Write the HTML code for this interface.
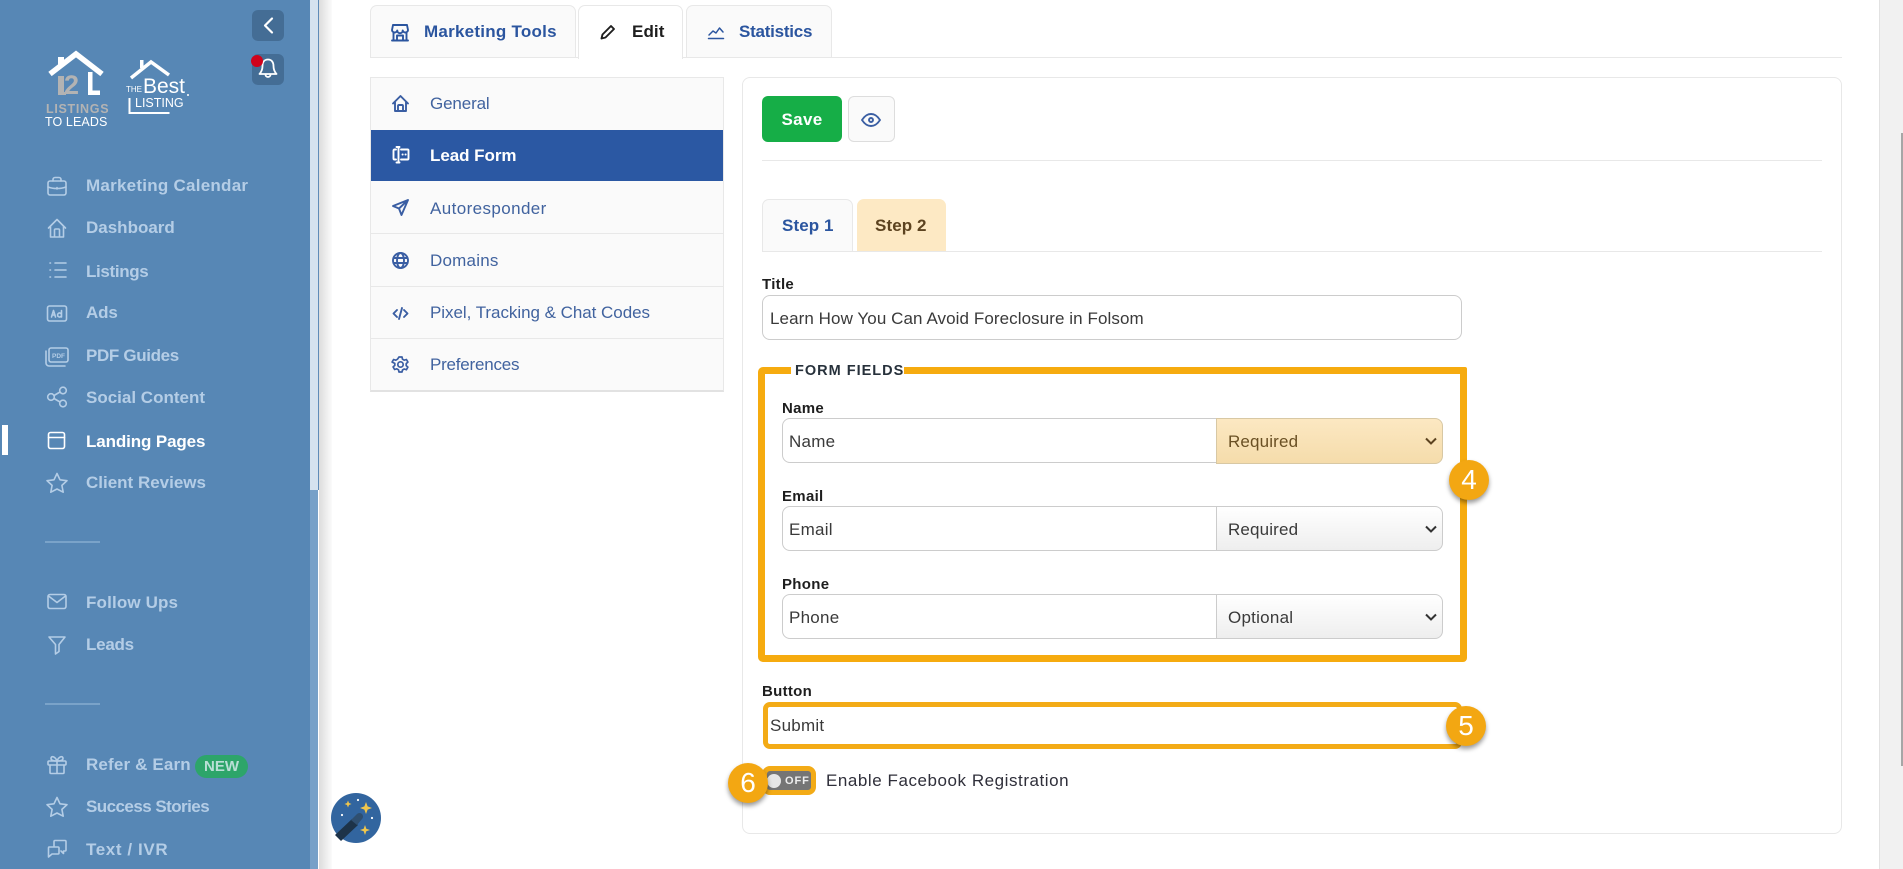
<!DOCTYPE html>
<html lang="en"><head><meta charset="utf-8"><title>Lead Form</title>
<style>
html,body{margin:0;padding:0;width:1903px;height:869px;overflow:hidden;background:#fff;font-family:"Liberation Sans",sans-serif;color:#333}
.a{position:absolute;box-sizing:border-box}
.t{position:absolute;white-space:nowrap;line-height:20px;height:20px}
.nav{left:86px;font-weight:700;font-size:17px;color:#b4cde6;letter-spacing:0}
.i{position:absolute;fill:none;stroke:#b4cde6;stroke-width:1.6;stroke-linecap:round;stroke-linejoin:round;overflow:visible}
.m{position:absolute;fill:none;stroke:#3a5ea3;stroke-width:1.9;stroke-linecap:round;stroke-linejoin:round;overflow:visible}
.tab{background:#fafafa;border:1px solid #e8e8e8;border-bottom:none;border-radius:7px 7px 0 0}
.tb{font-weight:700;font-size:17px;color:#2b559f;letter-spacing:.25px}
.row{left:371px;width:353px;height:1px;background:#e8e8e8}
.mi{left:430px;font-size:17px;color:#41639f}
.lb{font-weight:700;font-size:15px;color:#1e1e1e;letter-spacing:.3px}
.v{font-size:17px;color:#3a3a3a;letter-spacing:.25px}
.inp{background:#fff;border:1px solid #ccc}
.sel{background:linear-gradient(#fff,#eee);border:1px solid #ccc;border-radius:0 8px 8px 0}
.badge{position:absolute;width:40px;height:40px;border-radius:50%;background:#f3a712;color:#fff;font-size:28px;line-height:40px;text-align:center;box-shadow:0 3px 5px rgba(0,0,0,.4)}
</style></head><body>

<!-- sidebar -->
<div class="a" style="left:0;top:0;width:310px;height:869px;background:#5787b5"></div>
<div class="a" style="left:310px;top:0;width:8px;height:490px;background:#d5e2ef"></div>
<div class="a" style="left:310px;top:490px;width:8px;height:379px;background:#76a0c8"></div>
<div class="a" style="left:318px;top:0;width:1px;height:490px;background:#5f8bb8"></div>
<div class="a" style="left:319px;top:0;width:13px;height:869px;background:linear-gradient(90deg,#dcdcdc,#fbfbfb)"></div>

<div class="a" style="left:252px;top:10px;width:32px;height:31px;border-radius:6px;background:#446d95"></div>
<svg class="a" style="left:252px;top:10px" width="32" height="31" viewBox="0 0 32 31"><path d="M20 8.500l-7 7 7 7" fill="none" stroke="#fff" stroke-width="2.200" stroke-linecap="round" stroke-linejoin="round"/></svg>
<div class="a" style="left:252px;top:54px;width:32px;height:31px;border-radius:6px;background:#446d95"></div>
<svg class="a" style="left:252px;top:54px" width="32" height="31" viewBox="0 0 32 31"><path d="M16 5.500c-3.800 0-5.500 3-5.500 6.500 0 4-1.200 6-3 8h17c-1.800-2-3-4-3-8 0-3.500-1.700-6.500-5.500-6.500zM13.500 20.500a2.500 2.500 0 0 0 5 0" fill="none" stroke="#fff" stroke-width="1.800" stroke-linejoin="round"/></svg>
<div class="a" style="left:251px;top:55px;width:12px;height:12px;border-radius:50%;background:#d0021b"></div>

<!-- logos -->
<svg class="a" style="left:40px;top:48px" width="160" height="85" viewBox="0 0 160 85">
<path d="M18 9h6v9h-6z" fill="#fff"/>
<path d="M10 26L36 6l26 20" fill="none" stroke="#fff" stroke-width="5.500"/>
<path d="M18 28h6v19h-6z" fill="#b3b3b3"/>
<path d="M18 47h8v-3h-8z" fill="#b3b3b3"/>
<text x="24" y="46" font-family="Liberation Sans" font-weight="700" font-size="27" fill="#b3b3b3" letter-spacing="-1">2</text>
<path d="M48 24h4.500v18.500H60v4.500H48z" fill="#fff"/>
<text x="6" y="65" font-family="Liberation Sans" font-weight="700" font-size="12.500" fill="#b3b3b3" letter-spacing=".7">LISTINGS</text>
<text x="5" y="78" font-family="Liberation Sans" font-size="12.500" fill="#fff" letter-spacing=".1">TO LEADS</text>
<path d="M100 12h3.500v8H100z" fill="#fff"/>
<path d="M91 30l20-16 18 13" fill="none" stroke="#fff" stroke-width="3.500"/>
<text x="86" y="44" font-family="Liberation Sans" font-size="8" fill="#fff">THE</text>
<text x="103" y="45" font-family="Liberation Sans" font-size="21" fill="#fff">Best</text>
<text x="95" y="59" font-family="Liberation Sans" font-size="12.500" fill="#fff">LISTING</text>
<path d="M89.500 50v15h40" fill="none" stroke="#fff" stroke-width="2"/>
<circle cx="148" cy="47" r="1" fill="#fff"/>
</svg>

<!-- nav icons -->
<svg class="i" style="left:46px;top:175px" width="22" height="22" viewBox="0 0 22 22"><rect x="2" y="6" width="18" height="14" rx="2"/><path d="M7 6V4.500a2 2 0 0 1 2-2h4a2 2 0 0 1 2 2V6M2 12c5 2 13 2 18 0M11 12.500v1.500"/></svg>
<svg class="i" style="left:46px;top:217px" width="22" height="22" viewBox="0 0 22 22"><path d="M2.500 11L11 2.500 19.500 11M4.500 9.500V20h13V9.500M8.500 20v-7a1 1 0 0 1 1-1h3a1 1 0 0 1 1 1v7"/></svg>
<svg class="i" style="left:48px;top:260px" width="20" height="20" viewBox="0 0 20 20"><path d="M7 3h11M7 10h11M7 17h11M2 3h.5M2 10h.5M2 17h.5"/></svg>
<svg class="i" style="left:46px;top:304px" width="22" height="20" viewBox="0 0 22 20"><rect x="1.500" y="2" width="19" height="15" rx="2"/><path d="M5.500 13l2-6.500L9.500 13M6 11h3M15.500 6.500V13M15.500 10.500a2 2 0 1 0 0 1"/></svg>
<svg class="i" style="left:44px;top:345px" width="26" height="24" viewBox="0 0 26 24"><rect x="5" y="3" width="19" height="14" rx="2"/><path d="M2 6v12a3 3 0 0 0 3 3h16"/><text x="8" y="13" font-family="Liberation Sans" font-size="6.500" font-weight="700" fill="#b4cde6" stroke="none">PDF</text></svg>
<svg class="i" style="left:46px;top:386px" width="22" height="22" viewBox="0 0 22 22"><circle cx="5" cy="11" r="3.300"/><circle cx="17" cy="4.500" r="3.300"/><circle cx="17" cy="17.500" r="3.300"/><path d="M8 9.500l6-3.500M8 12.500l6 3.500"/></svg>
<svg class="i" style="left:46px;top:430px" width="22" height="22" viewBox="0 0 22 22"><g stroke="#fff"><rect x="2.500" y="2.500" width="16" height="16" rx="2"/><path d="M2.500 7.500h16"/></g></svg>
<svg class="i" style="left:46px;top:471px" width="22" height="24" viewBox="0 0 22 22"><path d="M11 1.500l3 6.300 7 .9-5.100 4.700 1.300 6.800L11 17l-6.200 3.200 1.300-6.800L1 8.700l7-.9z"/></svg>
<svg class="i" style="left:46px;top:592px" width="22" height="20" viewBox="0 0 22 20"><rect x="2" y="2.500" width="18" height="14" rx="2"/><path d="M2.500 4l8.500 6.500L19.500 4"/></svg>
<svg class="i" style="left:47px;top:634px" width="20" height="22" viewBox="0 0 20 22"><path d="M2 3h16l-6 7.500v7l-3.500 2.500v-9.500z"/></svg>
<svg class="i" style="left:46px;top:754px" width="22" height="22" viewBox="0 0 22 22"><rect x="2" y="7" width="18" height="4" rx="1"/><path d="M4 11v7.500a1 1 0 0 0 1 1h12a1 1 0 0 0 1-1V11M11 7v12.500M11 7C9 2 5 1.500 5 4.500 5 6.500 8 7 11 7zM11 7c2-5 6-5.500 6-2.500C17 6.500 14 7 11 7z"/></svg>
<svg class="i" style="left:46px;top:795px" width="22" height="24" viewBox="0 0 22 22"><path d="M11 1.500l3 6.300 7 .9-5.100 4.700 1.300 6.800L11 17l-6.200 3.200 1.300-6.800L1 8.700l7-.9z"/></svg>
<svg class="i" style="left:46px;top:838px" width="22" height="22" viewBox="0 0 22 22"><path d="M8 8V3.500a1 1 0 0 1 1-1h10a1 1 0 0 1 1 1V12a1 1 0 0 1-1 1h-1.500v2.500L15 13M3 9h9a1 1 0 0 1 1 1v5a1 1 0 0 1-1 1H6l-3.500 3V10a1 1 0 0 1 .5-1z"/></svg>

<div class="t nav" style="top:176px;letter-spacing:.25px">Marketing Calendar</div>
<div class="t nav" style="top:218px">Dashboard</div>
<div class="t nav" style="top:262px;letter-spacing:-.35px">Listings</div>
<div class="t nav" style="top:303px;letter-spacing:-.15px">Ads</div>
<div class="t nav" style="top:346px;letter-spacing:-.35px">PDF Guides</div>
<div class="t nav" style="top:388px">Social Content</div>
<div class="t nav" style="top:432px;color:#fff;letter-spacing:-.12px">Landing Pages</div>
<div class="t nav" style="top:473px">Client Reviews</div>
<div class="a" style="left:45px;top:541px;width:55px;height:2px;background:#7aa3c9"></div>
<div class="t nav" style="top:593px;letter-spacing:.15px">Follow Ups</div>
<div class="t nav" style="top:635px;letter-spacing:-.25px">Leads</div>
<div class="a" style="left:45px;top:703px;width:55px;height:2px;background:#7aa3c9"></div>
<div class="t nav" style="top:755px;letter-spacing:.15px">Refer &amp; Earn</div>
<div class="a" style="left:195px;top:755px;width:53px;height:23px;border-radius:12px;background:#2da56a;color:#b9dfd6;font-weight:700;font-size:15px;line-height:24px;text-align:center">NEW</div>
<div class="t nav" style="top:797px;letter-spacing:-.55px">Success Stories</div>
<div class="t nav" style="top:840px;letter-spacing:.6px">Text / IVR</div>
<div class="a" style="left:2px;top:425px;width:6px;height:30px;background:#fff"></div>

<!-- magic -->
<svg class="a" style="left:331px;top:793px" width="50" height="50" viewBox="0 0 50 50"><circle cx="25" cy="25" r="25" fill="#32659f"/><path d="M4 42L21 26l6 6-17 16z" fill="#1d3349"/><path d="M20 27l6-6a3.500 3.500 0 0 1 5 5l-5 6z" fill="#2f4f70"/><path d="M35 9l1.600 4.400L41 15l-4.400 1.600L35 21l-1.600-4.400L29 15l4.400-1.600zM34 32l1.300 3.700L39 37l-3.700 1.300L34 42l-1.300-3.700L29 37l3.700-1.300zM17 7.500l1 2.500 2.500 1-2.500 1-1 2.500-1-2.500-2.500-1 2.500-1z" fill="#f0c64c"/><circle cx="27" cy="7" r="1.100" fill="#fff"/><circle cx="11" cy="22" r="1.100" fill="#fff"/><circle cx="41" cy="25" r="1.100" fill="#fff"/></svg>

<!-- top tabs -->
<div class="a" style="left:370px;top:57px;width:1472px;height:1px;background:#e8e8e8"></div>
<div class="a tab" style="left:370px;top:5px;width:206px;height:52px"></div>
<div class="a tab" style="left:578px;top:5px;width:105px;height:54px;background:#fff"></div>
<div class="a tab" style="left:686px;top:5px;width:146px;height:52px"></div>
<svg class="m" style="left:391px;top:24px;stroke:#2b559f" width="18" height="18" viewBox="0 0 18 18"><path d="M2 1h14M2 1L1 6a2.700 2.700 0 0 0 5.300.5 2.700 2.700 0 0 0 5.400 0A2.700 2.700 0 0 0 17 6l-1-5M2.500 9V16.500h13V9M6 16.500v-5h6v5M1 16.500h16"/></svg>
<svg class="m" style="left:600px;top:24px;stroke:#1e1e1e" width="16" height="16" viewBox="0 0 16 16"><path d="M11 2l3 3-8.500 8.500-4 1 1-4z"/></svg>
<svg class="m" style="left:708px;top:24px;stroke:#2b559f;stroke-width:1.500" width="16" height="16" viewBox="0 0 16 16"><path d="M1 11l4-4 3 2 3.500-5L15 8M.5 14.500h15"/></svg>
<div class="t tb" style="left:424px;top:22px">Marketing Tools</div>
<div class="t tb" style="left:632px;top:22px;color:#1e1e1e;letter-spacing:.1px">Edit</div>
<div class="t tb" style="left:739px;top:22px;letter-spacing:-.24px">Statistics</div>

<!-- left menu -->
<div class="a" style="left:370px;top:77px;width:354px;height:315px;background:#fafafa;border:1px solid #e8e8e8;border-bottom:2px solid #e2e2e2"></div>
<div class="a" style="left:371px;top:130px;width:352px;height:51px;background:#2b58a3"></div>
<div class="a row" style="top:233px"></div><div class="a row" style="top:286px"></div><div class="a row" style="top:338px"></div>
<svg class="m" style="left:392px;top:95px" width="17" height="17" viewBox="0 0 17 17"><path d="M1 8.500L8.500 1 16 8.500M3 7v9h11V7M6 16v-5a1 1 0 0 1 1-1h3a1 1 0 0 1 1 1v5"/></svg>
<svg class="m" style="left:392px;top:146px;stroke:#fff" width="18" height="18" viewBox="0 0 18 18"><path d="M4 3.500H2.500A1 1 0 0 0 1.500 4.500v8a1 1 0 0 0 1 1H4M9 3.500h6.500a1 1 0 0 1 1 1v8a1 1 0 0 1-1 1H9M4.500 1h3M6.500 1v15.500M4.500 16.500h3M10.500 8.500h.2M13.500 8.500h.2"/></svg>
<svg class="m" style="left:392px;top:199px" width="17" height="17" viewBox="0 0 17 17"><path d="M16 1L1 7l6 2.500L9.500 16zM16 1L7 9.500"/></svg>
<svg class="m" style="left:392px;top:252px" width="17" height="17" viewBox="0 0 17 17"><circle cx="8.500" cy="8.500" r="7.500"/><ellipse cx="8.500" cy="8.500" rx="3.500" ry="7.500"/><path d="M1.500 6h14M1.500 11h14"/></svg>
<svg class="m" style="left:392px;top:305px" width="17" height="17" viewBox="0 0 17 17"><path d="M5 5L1.500 8.500 5 12M12 5l3.500 3.500L12 12M10 3L7 14"/></svg>
<svg class="m" style="left:392px;top:356px;stroke-width:1.700" width="17" height="17" viewBox="0 0 17 17"><circle cx="8.500" cy="8.500" r="2.700"/><path d="M7 1h3l.5 2.200 1.700 1 2.200-.7 1.500 2.600-1.700 1.500v2l1.700 1.500-1.500 2.600-2.200-.7-1.700 1L10 16H7l-.5-2.200-1.700-1-2.200.7-1.500-2.600 1.700-1.500v-2L.1 6.100l1.500-2.600 2.200.7 1.700-1z"/></svg>
<div class="t mi" style="top:94px;letter-spacing:-.13px">General</div>
<div class="t mi" style="top:146px;color:#fff;font-weight:700;letter-spacing:-.05px">Lead Form</div>
<div class="t mi" style="top:199px;letter-spacing:.4px">Autoresponder</div>
<div class="t mi" style="top:251px;letter-spacing:.22px">Domains</div>
<div class="t mi" style="top:303px;letter-spacing:-.04px">Pixel, Tracking &amp; Chat Codes</div>
<div class="t mi" style="top:355px;letter-spacing:-.22px">Preferences</div>

<!-- card -->
<div class="a" style="left:742px;top:77px;width:1100px;height:757px;border:1px solid #e8e8e8;border-radius:8px;background:#fff"></div>
<div class="a" style="left:762px;top:96px;width:80px;height:46px;background:#16ae47;border-radius:6px;color:#fff;font-weight:700;font-size:17px;letter-spacing:.3px;line-height:48px;text-align:center">Save</div>
<div class="a" style="left:848px;top:96px;width:47px;height:46px;background:#fafafa;border:1px solid #ddd;border-radius:6px"></div>
<svg class="m" style="left:861px;top:112px" width="20" height="16" viewBox="0 0 20 16"><path d="M1 8c3-4.500 5.500-6 9-6s6 1.500 9 6c-3 4.500-5.500 6-9 6s-6-1.500-9-6z"/><circle cx="10" cy="8" r="2"/></svg>
<div class="a" style="left:762px;top:160px;width:1060px;height:1px;background:#e8e8e8"></div>
<div class="a" style="left:762px;top:251px;width:1060px;height:1px;background:#e8e8e8"></div>
<div class="a tab" style="left:762px;top:199px;width:91px;height:52px"></div>
<div class="a" style="left:857px;top:199px;width:89px;height:52px;background:#fde9c4;border-radius:7px 7px 0 0"></div>
<div class="t tb" style="left:782px;top:216px;letter-spacing:.1px">Step 1</div>
<div class="t tb" style="left:875px;top:216px;color:#5c4320;letter-spacing:.1px">Step 2</div>

<div class="t lb" style="left:762px;top:275px">Title</div>
<div class="a inp" style="left:762px;top:295px;width:700px;height:45px;border-radius:8px"></div>
<div class="t v" style="left:770px;top:309px;letter-spacing:.08px">Learn How You Can Avoid Foreclosure in Folsom</div>

<!-- form fields -->
<div class="a" style="left:758px;top:367px;width:709px;height:295px;border:7px solid #f6ab0f;border-radius:5px 2px 4px 5px"></div>
<div class="a" style="left:791px;top:364px;width:113px;height:14px;background:#fff"></div>
<div class="t lb" style="left:795px;top:361px;letter-spacing:1px;font-size:14.500px;color:#27313b">FORM FIELDS</div>

<div class="t lb" style="left:782px;top:399px">Name</div>
<div class="a inp" style="left:782px;top:418px;width:435px;height:45px;border-radius:8px 0 0 8px"></div>
<div class="a" style="left:1216px;top:418px;width:227px;height:46px;background:linear-gradient(#fce8c2,#f5dcab);border:1px solid #d8c8a4;border-radius:0 8px 8px 0"></div>
<div class="t v" style="left:789px;top:432px">Name</div>
<div class="t v" style="left:1228px;top:432px;color:#6a5024;letter-spacing:.15px">Required</div>

<div class="t lb" style="left:782px;top:487px">Email</div>
<div class="a inp" style="left:782px;top:506px;width:435px;height:45px;border-radius:8px 0 0 8px"></div>
<div class="a sel" style="left:1216px;top:506px;width:227px;height:45px"></div>
<div class="t v" style="left:789px;top:520px">Email</div>
<div class="t v" style="left:1228px;top:520px;letter-spacing:.15px">Required</div>

<div class="t lb" style="left:782px;top:575px">Phone</div>
<div class="a inp" style="left:782px;top:594px;width:435px;height:45px;border-radius:8px 0 0 8px"></div>
<div class="a sel" style="left:1216px;top:594px;width:227px;height:45px"></div>
<div class="t v" style="left:789px;top:608px">Phone</div>
<div class="t v" style="left:1228px;top:608px">Optional</div>

<svg class="a" style="left:1424px;top:436px" width="14" height="10" viewBox="0 0 14 10"><path d="M2 2.500l5 5 5-5" fill="none" stroke="#5c4320" stroke-width="2"/></svg>
<svg class="a" style="left:1424px;top:524px" width="14" height="10" viewBox="0 0 14 10"><path d="M2 2.500l5 5 5-5" fill="none" stroke="#333" stroke-width="2"/></svg>
<svg class="a" style="left:1424px;top:612px" width="14" height="10" viewBox="0 0 14 10"><path d="M2 2.500l5 5 5-5" fill="none" stroke="#333" stroke-width="2"/></svg>

<div class="badge" style="left:1449px;top:460px">4</div>

<div class="t lb" style="left:762px;top:682px">Button</div>
<div class="a" style="left:763px;top:702px;width:699px;height:47px;border:5px solid #f3ab16;border-radius:7px;background:#fff"></div>
<div class="t v" style="left:770px;top:716px">Submit</div>
<div class="badge" style="left:1446px;top:706px">5</div>

<div class="a" style="left:762px;top:766px;width:54px;height:29px;border:5px solid #f3ab16;border-radius:8px;background:#757575"></div>
<div class="a" style="left:767px;top:774px;width:14px;height:14px;border-radius:50%;background:#e6e6e6"></div>
<div class="t" style="left:785px;top:771px;color:#eee;font-weight:700;font-size:11px;letter-spacing:.9px">OFF</div>
<div class="badge" style="left:728px;top:763px">6</div>
<div class="t v" style="left:826px;top:771px;color:#2f2f3a;letter-spacing:.55px">Enable Facebook Registration</div>

<!-- page scrollbar -->
<div class="a" style="left:1879px;top:0;width:24px;height:869px;background:#f1f1f1;border-left:1px solid #e2e2e2"></div>
<div class="a" style="left:1901px;top:133px;width:2px;height:633px;background:#a6a6a6"></div>
</body></html>
